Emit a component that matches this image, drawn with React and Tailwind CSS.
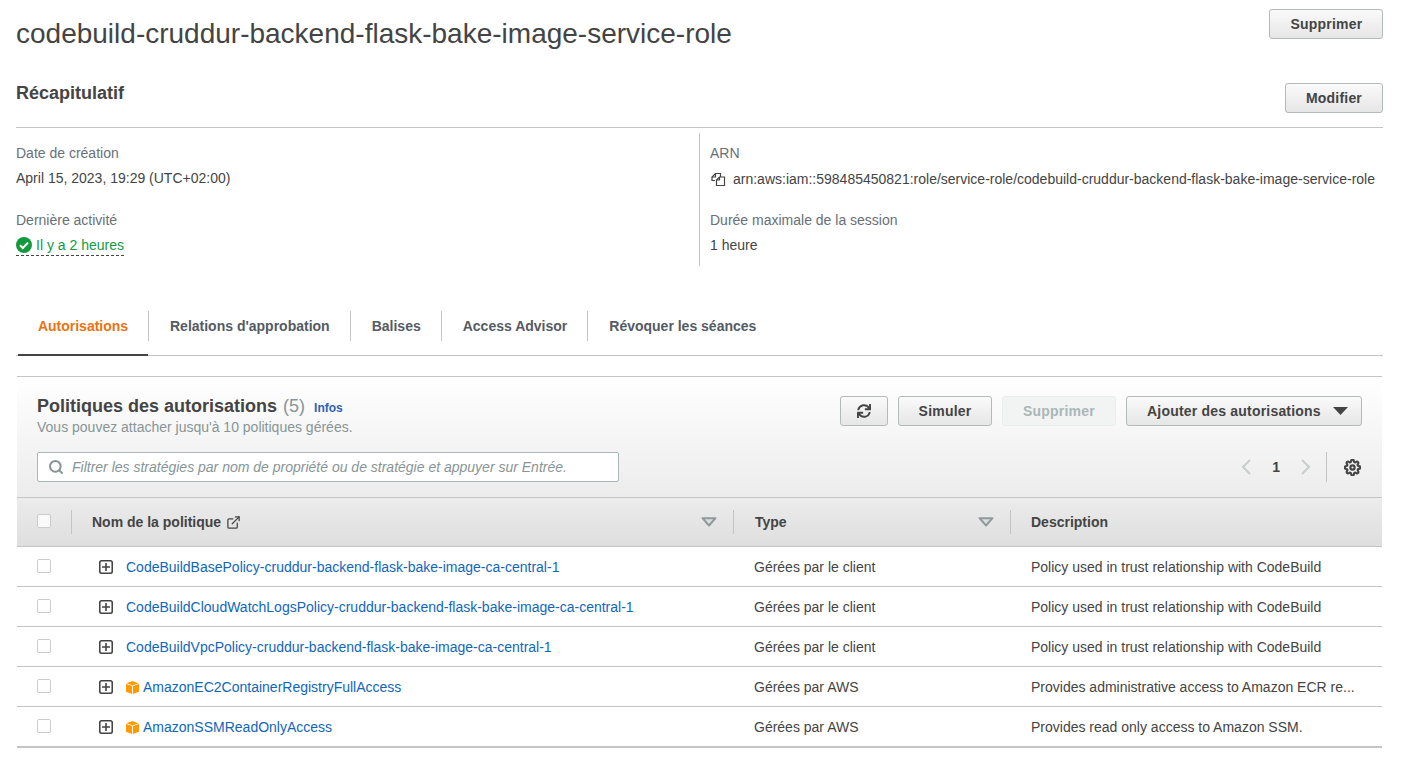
import React from "react";
import { Search, ExternalLink } from "lucide-react";
import { FaSync } from "react-icons/fa";
import { FiSettings } from "react-icons/fi";

const font = { fontFamily: '"Liberation Sans", Arial, sans-serif' };

const btn =
  "border border-[#b4b9b9] rounded-[3px] bg-gradient-to-b from-[#fafafa] to-[#e6e6e6] text-sm font-bold tracking-[0.2px] text-[#444] flex items-center justify-center";

const policies = [
  { name: "CodeBuildBasePolicy-cruddur-backend-flask-bake-image-ca-central-1", type: "Gérées par le client", desc: "Policy used in trust relationship with CodeBuild" },
  { name: "CodeBuildCloudWatchLogsPolicy-cruddur-backend-flask-bake-image-ca-central-1", type: "Gérées par le client", desc: "Policy used in trust relationship with CodeBuild" },
  { name: "CodeBuildVpcPolicy-cruddur-backend-flask-bake-image-ca-central-1", type: "Gérées par le client", desc: "Policy used in trust relationship with CodeBuild" },
  { name: "AmazonEC2ContainerRegistryFullAccess", type: "Gérées par AWS", desc: "Provides administrative access to Amazon ECR re...", aws: true },
  { name: "AmazonSSMReadOnlyAccess", type: "Gérées par AWS", desc: "Provides read only access to Amazon SSM.", aws: true },
];

const tabs = ["Relations d'approbation", "Balises", "Access Advisor", "Révoquer les séances"];

const Checkbox = ({ bright }) => (
  <span className={`block w-[14px] h-[14px] rounded-[2px] border border-[#c8cccc] ${bright ? "bg-[#fafafa]" : "bg-white"}`} />
);

const PlusBox = () => (
  <svg width="14" height="14" viewBox="0 0 14 14" fill="none" stroke="#444" className="shrink-0">
    <rect x="0.75" y="0.75" width="12.5" height="12.5" rx="2" strokeWidth="1.6" />
    <path d="M7 3v8M3 7h8" strokeWidth="1.6" />
  </svg>
);

const AwsCube = () => (
  <svg width="13" height="13" viewBox="0 0 13 13" className="shrink-0">
    <path d="M6.5 0 L12.5 2.2 L6.5 4.4 L0.5 2.2 Z" fill="#f90" />
    <path d="M0 3 L6 5.1 V13 L0 10.8 Z" fill="#f90" />
    <path d="M13 3 L7 5.1 V13 L13 10.8 Z" fill="#f90" />
  </svg>
);

const SortCaret = () => (
  <svg width="16" height="10" viewBox="0 0 16 10" className="shrink-0">
    <path d="M1.5 1.2h13L8 8.5z" fill="#dcdcdc" stroke="#8f9a9b" strokeWidth="2" strokeLinejoin="round" />
  </svg>
);

const CopyIcon = () => (
  <svg width="15" height="15" viewBox="0 0 15 15" fill="none" stroke="#444" strokeWidth="1.2" className="shrink-0">
    <path d="M4 8.5H1V5L4.5 1.5H9.5V5" />
    <path d="M4.5 1.5V5H1" />
    <path d="M5.5 8L8.5 5H13.5V13.5H5.5Z" fill="#fff" />
    <path d="M8.5 5V8H5.5" />
  </svg>
);

const Chevron = ({ d }) => (
  <svg width="12" height="18" viewBox="0 0 12 18" fill="none" stroke="#c8cdcd" strokeWidth="2" className="shrink-0">
    <path d={d} />
  </svg>
);

const App = () => {
  return (
    <div style={font} className="h-[770px] overflow-hidden bg-white pl-4 pr-[30px] text-sm text-[#16191f]">
      {/* Header */}
      <div className="flex justify-between h-[83px]">
        <h1 className="text-[28px] leading-[32px] text-[#444] mt-[18px]">
          codebuild-cruddur-backend-flask-bake-image-service-role
        </h1>
        <button className={`${btn} w-[114px] h-[30px] mt-[9px] pl-[1px]`}>Supprimer</button>
      </div>

      {/* Summary */}
      <div className="flex justify-between h-[45px] border-b border-[#c4c4c4]">
        <h2 className="text-lg font-bold text-[#444] leading-[20px]">Récapitulatif</h2>
        <button className={`${btn} w-[98px] h-[30px]`}>Modifier</button>
      </div>
      <div className="flex pt-[5px]">
        <div className="w-[683px] h-[133px]">
          <div className="text-[#687078] leading-[20px] mt-[10px]">Date de création</div>
          <div className="text-[#444] leading-[20px] mt-[5px]">April 15, 2023, 19:29 (UTC+02:00)</div>
          <div className="text-[#687078] leading-[20px] mt-[22px]">Dernière activité</div>
          <div className="mt-[5px] flex items-center gap-[4px] w-fit border-b border-dashed border-[#444] h-[21px]">
            <svg width="16" height="16" viewBox="0 0 16 16" className="shrink-0">
              <circle cx="8" cy="8" r="8" fill="#139a3f" />
              <path d="M4 8.2l2.8 2.8L12 5.6" fill="none" stroke="#fff" strokeWidth="2" />
            </svg>
            <span className="text-[#139a3f]">Il y a 2 heures</span>
          </div>
        </div>
        <div className="h-[133px] border-l border-[#c4c4c4] pl-[10px] flex-1">
          <div className="text-[#687078] leading-[20px] mt-[10px]">ARN</div>
          <div className="text-[#444] leading-[20px] mt-[6px] flex items-center gap-[7px] pl-[1px]">
            <CopyIcon />
            <span>arn:aws:iam::598485450821:role/service-role/codebuild-cruddur-backend-flask-bake-image-service-role</span>
          </div>
          <div className="text-[#687078] leading-[20px] mt-[21px]">Durée maximale de la session</div>
          <div className="text-[#444] leading-[20px] mt-[5px]">1 heure</div>
        </div>
      </div>

      {/* Tabs */}
      <div className="flex items-start h-[95px] mt-[-5px] pt-[50px] border-b border-[#c4c4c4]">
        <div className="pl-[2px] -mb-[1px]">
          <div className="h-[45px] w-[130px] border-b-2 border-[#444] flex pb-[13px] items-center justify-center">
            <span className="font-bold text-[#ec7211]">Autorisations</span>
          </div>
        </div>
        {tabs.map((tab) => (
          <div key={tab} className="h-[30px] border-l border-[#c4c4c4] pl-[21px] pr-[20px] flex items-center font-bold text-[#545b64]">
            {tab}
          </div>
        ))}
      </div>

      {/* Policies panel */}
      <div className="mt-5 mx-[1px]">
        <div className="border-t border-[#c4c4c4] bg-gradient-to-b from-white to-[#ececec] h-[121px] px-5 pt-[19px]">
          <div className="flex justify-between">
            <div>
              <div className="flex items-baseline">
                <span className="text-lg leading-[20px] font-bold text-[#444]">Politiques des autorisations</span>
                <span className="text-lg leading-[20px] text-[#879596] ml-[6px]">(5)</span>
                <span className="text-xs leading-[20px] font-bold text-[#2d62b3] ml-[9px]">Infos</span>
              </div>
              <div className="text-[#879596] leading-[20px] -mt-[1px]">Vous pouvez attacher jusqu'à 10 politiques gérées.</div>
            </div>
            <div className="flex gap-[10px] h-[30px]">
              <button className={`${btn} w-[48px]`}>
                <FaSync size={14} />
              </button>
              <button className={`${btn} w-[94px]`}>Simuler</button>
              <button className="h-[30px] w-[114px] rounded-[3px] border border-[#eaeded] bg-[#f2f3f3] text-sm font-bold tracking-[0.2px] text-[#aab7b8]">Supprimer</button>
              <button className={`${btn} w-[236px] !justify-start pl-5 gap-3`}>
                Ajouter des autorisations
                <svg width="15" height="8" viewBox="0 0 15 8"><path d="M0 0h15L7.5 8z" fill="#444" /></svg>
              </button>
            </div>
          </div>
          <div className="flex justify-between items-center mt-[15px]">
            <div className="w-[582px] h-[30px] bg-white border border-[#aab7b8] rounded-[2px] flex items-center pl-[10px] gap-[8px]">
              <Search size={16} strokeWidth={3} className="text-[#879596]" />
              <span className="italic text-[#879596]">Filtrer les stratégies par nom de propriété ou de stratégie et appuyer sur Entrée.</span>
            </div>
            <div className="flex items-center h-[30px] pr-[1px]">
              <Chevron d="M10 2L3 9l7 7" />
              <span className="ml-5 mr-5 font-bold text-[#444] text-sm">1</span>
              <Chevron d="M2 2l7 7-7 7" />
              <span className="w-px h-[30px] bg-[#c4c4c4] ml-[14px] mr-[17px]" />
              <FiSettings size={17} strokeWidth={3} className="text-[#444]" />
            </div>
          </div>
        </div>

        {/* Table head */}
        <div className="flex items-center h-[50px] border-y border-[#c4c4c4] bg-gradient-to-b from-[#ececec] to-[#dedede] font-bold text-[#444]">
          <div className="w-[55px] h-[24px] pl-5 pb-[2px] flex items-center border-r border-[#c4c4c4]"><Checkbox bright /></div>
          <div className="w-[661px] pl-5 pr-[16px] flex items-center justify-between">
            <span className="flex items-center gap-[5px]">
              Nom de la politique
              <ExternalLink size={15} strokeWidth={2} />
            </span>
            <SortCaret />
          </div>
          <div className="w-[277px] h-[24px] pl-[21px] pr-[16px] flex items-center justify-between border-l border-[#c4c4c4]">
            <span>Type</span>
            <SortCaret />
          </div>
          <div className="h-[24px] pl-5 flex items-center border-l border-[#c4c4c4]">Description</div>
        </div>

        {/* Rows */}
        <div className="border-b-2 border-[#c4c4c4]">
          {policies.map((p, i) => (
            <div key={p.name} className={`flex items-center pt-[1px] ${i < 4 ? "h-[40px] border-b border-[#c4c4c4]" : "h-[39px]"}`}>
              <div className="w-[82px] pl-5 pb-[2px]"><Checkbox /></div>
              <div className="w-[655px] flex items-center">
                <PlusBox />
                <span className="ml-[13px] flex items-center gap-[4px]">
                  {p.aws ? <AwsCube /> : null}
                  <span className="text-[#1166bb]">{p.name}</span>
                </span>
              </div>
              <div className="w-[277px] text-[#444]">{p.type}</div>
              <div className="text-[#444]">{p.desc}</div>
            </div>
          ))}
        </div>
      </div>
    </div>
  );
};

export default App;
